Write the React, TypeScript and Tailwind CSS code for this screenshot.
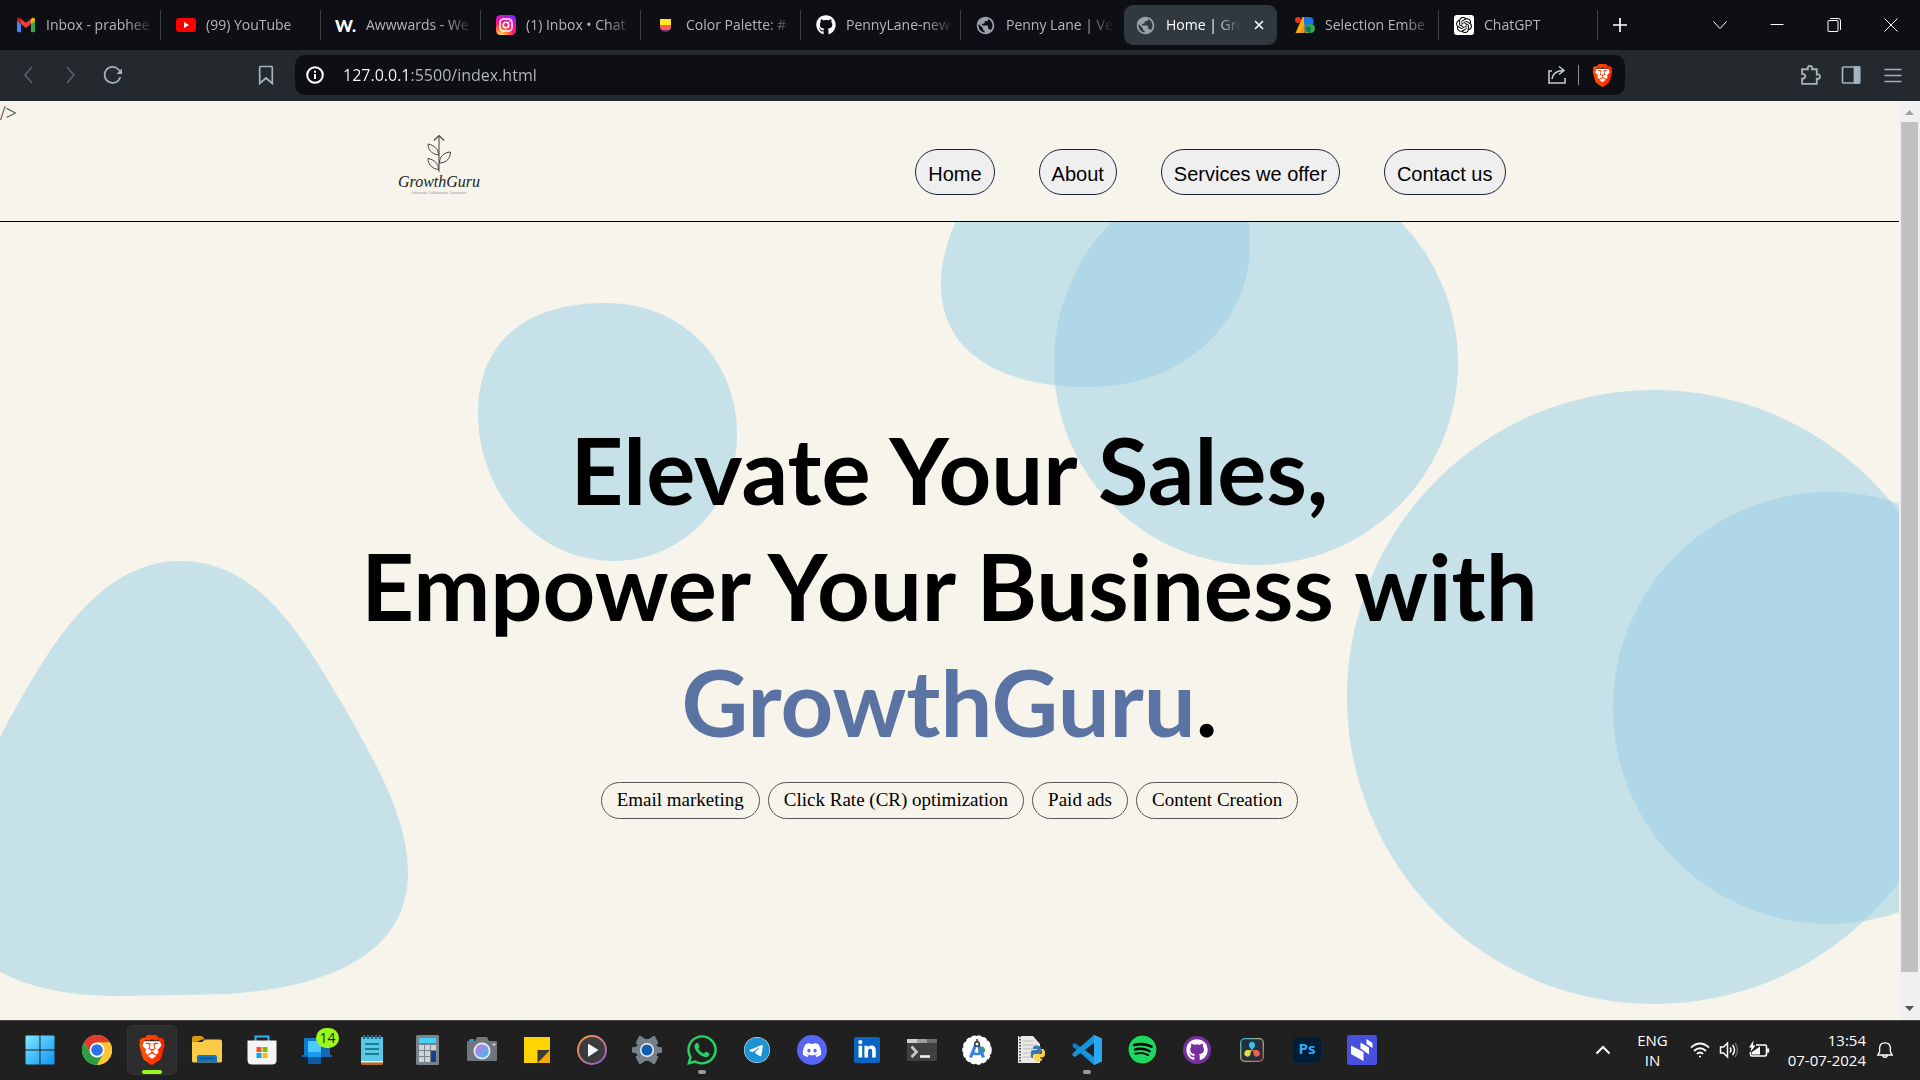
import React from "react";
import {
  FaGithub,
  FaWhatsapp,
  FaTelegram,
  FaDiscord,
  FaSpotify,
  FaLinkedinIn,
} from "react-icons/fa6";
import { SiBrave, SiOpenai } from "react-icons/si";
import { MdPublic } from "react-icons/md";

/* ---------- favicons ---------- */

const Gmail = () => (
  <svg viewBox="0 0 20 16" className="h-4 w-[18px]">
    <path d="M0 3v11.500q0 1.500 1.500 1.500H4.500V6.500z" fill="#4285f4" />
    <path d="M20 3v11.500q0 1.500-1.500 1.500H15.500V6.500z" fill="#34a853" />
    <path d="M15.500 1.500V7L20 3.500V2.200C20 .2 17.800-.6 16.200.6z" fill="#fbbc04" />
    <path d="M4.500 1.500V7L0 3.500V2.200C0 .2 2.200-.6 3.800.6z" fill="#c5221f" />
    <path d="M4.500 7V1.200L10 5.500l5.500-4.300V7L10 11.200z" fill="#ea4335" />
  </svg>
);

const YouTube = () => (
  <svg viewBox="0 0 20 14" className="h-[14px] w-5">
    <rect width="20" height="14" rx="3" fill="#f00" />
    <path d="M8 4l5 3-5 3z" fill="#fff" />
  </svg>
);

const Awwwards = () => (
  <span className="font-['Lato'] text-[17px] leading-none font-black text-white">W.</span>
);

const Instagram = () => (
  <svg viewBox="0 0 20 20" className="size-5">
    <defs>
      <radialGradient id="ig" cx="0.25" cy="1.050" r="1.150">
        <stop offset="0.050" stopColor="#fd5" />
        <stop offset="0.300" stopColor="#ff7a30" />
        <stop offset="0.550" stopColor="#ff1a68" />
        <stop offset="0.800" stopColor="#e010c0" />
        <stop offset="1" stopColor="#7a2bff" />
      </radialGradient>
    </defs>
    <rect width="20" height="20" rx="4.500" fill="url(#ig)" />
    <rect x="4" y="4" width="12" height="12" rx="3.500" fill="none" stroke="#fff" strokeWidth="1.500" />
    <circle cx="10" cy="10" r="2.800" fill="none" stroke="#fff" strokeWidth="1.500" />
    <circle cx="13.500" cy="6.500" r=".8" fill="#fff" />
  </svg>
);

const ColorHunt = () => (
  <svg viewBox="0 0 11 13" className="h-[13px] w-[11px]">
    <path d="M0 0h11v7.500a5.500 5.500 0 0 1-11 0z" fill="#6a2c70" />
    <path d="M0 0h11v7.500q0 2-1.500 3.500h-8Q0 9.500 0 7.500z" fill="#ff5a5f" />
    <path d="M0 0h11v6H0z" fill="#ffe62b" />
  </svg>
);

const EmberIcon = () => (
  <svg viewBox="0 0 20 16" className="h-4 w-5">
    <path d="M7.500 0h6v16h-13z" fill="#fa0" />
    <circle cx="3" cy="3" r="3" fill="#ea3323" />
    <path d="M9 0h6a4.500 4.500 0 0 1 1 8.500L11 16H9z" fill="#1a73e8" />
    <circle cx="15.500" cy="11.500" r="4.500" fill="#34a853" />
    <path d="M11.500 9.500h4v6.400a4.500 4.500 0 0 1-4-6.400z" fill="#0b7a3b" />
    <path d="M9.500 6L9.500 16H5z" fill="#f29900" />
  </svg>
);

const ChatGpt = () => (
  <span className="flex size-5 items-center justify-center rounded-[3px] bg-white">
    <SiOpenai className="size-4 text-black" />
  </span>
);

const Globe = () => <MdPublic className="size-[21px] text-[#9aa0a6]" />;

const Lion = ({ id, className }: { id: string; className: string }) => (
  <span className={"relative flex items-center justify-center " + className}>
    <svg viewBox="0 0 24 24" className="absolute inset-0 size-full">
      <defs>
        <linearGradient id={id} x1="0" y1="0" x2="1" y2="0">
          <stop offset="0" stopColor="#ff5500" />
          <stop offset="1" stopColor="#ff2000" />
        </linearGradient>
      </defs>
      <path d="M5.500 5h13L20 9l-3 8-5 5-5-5-3-8z" fill="#fff" />
    </svg>
    <SiBrave className="relative size-full" style={{ fill: `url(#${id})` }} />
  </span>
);

/* ---------- browser chrome ---------- */

const tabs: { title: string; icon: React.ReactNode }[] = [
  { title: "Inbox - prabhee", icon: <Gmail /> },
  { title: "(99) YouTube", icon: <YouTube /> },
  { title: "Awwwards - We", icon: <Awwwards /> },
  { title: "(1) Inbox • Chat", icon: <Instagram /> },
  { title: "Color Palette: #", icon: <ColorHunt /> },
  { title: "PennyLane-new", icon: <FaGithub className="size-5 text-white" /> },
  { title: "Penny Lane | Ve", icon: <Globe /> },
  { title: "Home | Gro", icon: <Globe /> },
  { title: "Selection Embe", icon: <EmberIcon /> },
  { title: "ChatGPT", icon: <ChatGpt /> },
];

const fade = "[mask-image:linear-gradient(90deg,#000_calc(100%_-_28px),transparent)]";

function Line({ d, className, width = 1 }: { d: string; className: string; width?: number }) {
  return (
    <svg viewBox="0 0 20 20" className={className} fill="none" stroke="currentColor" strokeWidth={width}>
      <path d={d} />
    </svg>
  );
}

function TabStrip() {
  return (
    <div className="flex h-[50px] items-center bg-[#0e0f14] pl-px text-[#b4b7ba]">
      <div role="tablist" className="flex h-full items-center">
        {tabs.map((t, i) => {
          const active = i === 7;
          return (
            <div
              key={t.title}
              className={
                "flex items-center " +
                (i > 6 ? "w-[159px] " : "w-40 ") +
                (active ? "px-[3px]" : i === 6 ? "" : "border-r border-[#3f4144]")
              }
            >
              <button
                role="tab"
                aria-selected={active}
                className={
                  "flex min-w-0 flex-1 items-center text-left " +
                  (active ? "h-10 rounded-[9px] bg-[#303840] pl-[11px] text-white" : "h-[30px] pl-3.5")
                }
              >
                <span className="flex w-[21px] shrink-0 items-center justify-center">{t.icon}</span>
                <span
                  className={
                    "ml-2.5 overflow-hidden text-sm whitespace-nowrap " +
                    (active ? "w-[75px] " : "w-[108px] ") +
                    fade
                  }
                >
                  {t.title}
                </span>
                {active && <Line d="M5 5l10 10M15 5L5 15" width={2} className="ml-2.5 size-4 shrink-0" />}
              </button>
            </div>
          );
        })}
      </div>
      <button aria-label="New tab" className="ml-3 text-white">
        <Line d="M10 3v14M3 10h14" width={1.700} className="size-5" />
      </button>
      <div className="mr-px ml-auto flex text-white">
        <button aria-label="Search tabs" className="flex w-14 justify-center">
          <Line d="M3.500 6.500L10 13.500l6.500-7" className="size-5" />
        </button>
        <button aria-label="Minimize" className="flex w-[57px] justify-center">
          <Line d="M3.500 9.500h13" className="size-5" />
        </button>
        <button aria-label="Restore" className="flex w-[57px] justify-center">
          <Line d="M4 6q0-.5.500-.5h9q.5 0 .5.500v10q0 .5-.5.500h-9q-.5 0-.5-.5zM6 3.500h8.500q2 0 2 2V15" className="size-5" />
        </button>
        <button aria-label="Close" className="flex w-[57px] justify-center">
          <Line d="M3.500 3.500l13 13M16.500 3.500l-13 13" className="size-5" />
        </button>
      </div>
    </div>
  );
}

function Toolbar() {
  return (
    <div className="flex h-[51px] items-center bg-[#23292d] pb-px text-[#a3b4bd]">
      <button aria-label="Back" className="ml-[18px] text-[#5b6469]">
        <Line d="M14 2L7 10l7 8" width={1.500} className="size-5" />
      </button>
      <button aria-label="Forward" className="ml-[23px] text-[#5b6469]">
        <Line d="M6 2l7 8-7 8" width={1.500} className="size-5" />
      </button>
      <button aria-label="Reload" className="ml-[22px]">
        <svg viewBox="0 0 20 20" className="size-5" fill="none" stroke="currentColor" strokeWidth="1.600">
          <path d="M17.300 12A8 8 0 1 1 15.500 4.500L18 7" />
          <path d="M19 3.500v5.500h-5.500z" fill="currentColor" stroke="none" />
        </svg>
      </button>
      <button aria-label="Bookmark this page" className="ml-[133px]">
        <Line d="M4.500 1.500h11q.8 0 .8.800V18.500L10 13l-6.300 5.500V2.300q0-.8.800-.8z" width={1.700} className="size-5" />
      </button>
      <div className="ml-[19px] flex h-10 min-w-0 flex-1 items-center rounded-[10px] bg-[#0e0f14] pl-2.5 text-white">
        <svg viewBox="0 0 20 20" className="size-5 shrink-0" fill="none" stroke="currentColor" strokeWidth="2">
          <circle cx="10" cy="10" r="7.800" />
          <path d="M10 9v5M10 5.800v2" />
        </svg>
        <input
          aria-label="Address"
          defaultValue="127.0.0.1:5500/index.html"
          className="ml-[18px] min-w-0 flex-1 bg-[linear-gradient(90deg,#fff_67px,#b6bbbf_67px)] bg-clip-text text-base text-transparent outline-none"
        />
        <button aria-label="Share" className="text-[#c3c8cb]">
          <Line d="M5 6H2v12h16v-5M5 14q1-8 11-8.500M12 1.500l5 4-5 4" width={1.600} className="size-5" />
        </button>
        <span className="ml-[11px] h-5 w-px bg-[#8d9296]" />
        <button aria-label="Brave Shields" className="mr-[11px] ml-3">
          <Lion id="shield" className="size-[23px]" />
        </button>
      </div>
      <button aria-label="Extensions" className="ml-[175px]">
        <Line
          d="M2 4h5.500q-.5-3 2-3t2 3H16v5q3-.5 3 2t-3 2v5H2v-5q3 0 3-2.300T2 8.500z"
          width={1.800}
          className="size-[21px]"
        />
      </button>
      <button aria-label="Sidebar" className="ml-5">
        <svg viewBox="0 0 20 20" className="size-5" fill="none" stroke="currentColor" strokeWidth="1.700">
          <rect x="1.500" y="2" width="17" height="16" rx="1" />
          <path d="M13.500 2h5v16h-5z" fill="currentColor" />
        </svg>
      </button>
      <button aria-label="Menu" className="mr-[17px] ml-[22px]">
        <Line d="M1.500 4.500h17M1.500 10.500h17M1.500 16.500h17" width={1.500} className="size-5" />
      </button>
    </div>
  );
}

/* ---------- web page ---------- */

function SiteLogo() {
  return (
    <a href="#home" className="flex w-[91px] flex-col items-center text-[#444]">
      <svg viewBox="0 0 30 40" className="h-10 w-[30px]" fill="none" stroke="currentColor">
        <path d="M15 2v36" strokeWidth="1.500" opacity=".7" />
        <path d="M10 6.500L15 1.500l5 5" strokeWidth="1.200" />
        <path d="M14.500 21C7 20 4 15 4 10c6 1 10.500 5 10.500 11zM14.500 35.500C7 34.500 4 29.500 4 24.500c6 1 10.500 5 10.500 11zM15.500 29c0-6 4-10.500 11-11 0 6-4 11-11 11z" strokeWidth="1" />
      </svg>
      <span className="font-['Liberation_Serif',serif] text-base leading-4 text-[#222] italic">GrowthGuru</span>
      <span className="font-['Liberation_Sans',sans-serif] text-[4px] leading-[6px] whitespace-nowrap text-[#999]">
        Innovate Collaborate Dominate
      </span>
    </a>
  );
}

function SiteHeader() {
  return (
    <header className="relative h-[121px] border-b border-black">
      <span className="absolute top-0 left-0 font-['Liberation_Serif',serif] text-xl leading-6 text-[#444]">/&gt;</span>
      <div className="mx-auto flex max-w-[1112px] items-start justify-between">
        <div className="pt-[33px]">
          <SiteLogo />
        </div>
        <nav className="flex gap-11 pt-12 font-['Liberation_Sans',sans-serif] text-xl text-black">
          {["Home", "About", "Services we offer", "Contact us"].map((n) => (
            <button key={n} className="h-[46px] rounded-full border border-[#1a2238] bg-[#efefef] px-3 pt-1">
              {n}
            </button>
          ))}
        </nav>
      </div>
    </header>
  );
}

function Blobs() {
  return (
    <svg
      viewBox="0 0 1899 798"
      preserveAspectRatio="xMidYMid slice"
      className="absolute inset-0 size-full"
      fill="#97cde6"
      fillOpacity=".5"
    >
      <path d="M478 191C478 125 520 81 606 81C684 81 737 140 737 212C737 285 680 339 614 339C536 339 478 270 478 191z" />
      <path d="M957-3C946 20 941 43 941 63C941 130 1000 165 1088 165C1185 165 1250 100 1250 22C1250 12 1250 5 1248-3z" />
      <path d="M-5 525L0 515C45 432 95 339 181 339C265 339 310 430 343 483C375 540 408 595 408 651C408 725 340 765 227 772L122 774C70 774 30 767-5 747z" />
      <circle cx="1256" cy="141" r="202" />
      <circle cx="1654" cy="475" r="307" />
      <circle cx="1829" cy="486" r="216" />
    </svg>
  );
}

function Hero() {
  return (
    <main className="relative flex-1 overflow-hidden">
      <Blobs />
      <div className="relative flex flex-col items-center pt-[190px]">
        <h1 className="text-center font-['Lato',sans-serif] text-[92px] leading-[116px] font-bold text-black">
          Elevate Your Sales,
          <br />
          Empower Your Business with
          <br />
          <span className="text-[#5a73a3]">GrowthGuru</span>.
        </h1>
        <ul className="mt-[22px] flex gap-2 font-['Liberation_Serif',serif] text-[19px] text-black">
          {["Email marketing", "Click Rate (CR) optimization", "Paid ads", "Content Creation"].map((c) => (
            <li key={c} className="flex h-[37px] items-center rounded-full border border-[#555] px-[15px]">
              {c}
            </li>
          ))}
        </ul>
      </div>
    </main>
  );
}

function ScrollBar() {
  return (
    <div className="flex w-[21px] flex-col items-center bg-[#f0f0f0]">
      <svg viewBox="0 0 21 21" className="size-[21px]">
        <path d="M6 14h9l-4.500-5z" fill="#a3a3a3" />
      </svg>
      <div className="w-[17px] flex-1 bg-[#c1c1c1]" />
      <svg viewBox="0 0 21 48" className="h-12 w-[21px]">
        <path d="M6 34h9l-4.500 5z" fill="#505050" />
      </svg>
    </div>
  );
}

/* ---------- taskbar icons ---------- */

const Windows = () => (
  <svg viewBox="0 0 30 30" className="size-[30px]">
    <defs>
      <linearGradient id="win" x1="0" y1="0" x2="1" y2="1">
        <stop offset="0" stopColor="#7deaff" />
        <stop offset="1" stopColor="#0f93f5" />
      </linearGradient>
    </defs>
    <path d="M.5 1.500a1 1 0 0 1 1-1H14.500v14H.5zM15.500.5h13a1 1 0 0 1 1 1v13h-14zM.5 15.500h14v14H1.500a1 1 0 0 1-1-1zM15.500 15.500h14v13a1 1 0 0 1-1 1h-13z" fill="url(#win)" />
  </svg>
);

const Chrome = () => (
  <svg viewBox="0 0 30 30" className="size-[30px]">
    <circle cx="15" cy="15" r="15" fill="#fbc02d" />
    <path d="M15 15L8.500 18.800 2 7.500A15 15 0 0 1 28 7.500H15z" fill="#e23b2e" />
    <path d="M2 7.500L8.500 18.800 15 22.500l6.500-3.700L15 30A15 15 0 0 1 2 7.500z" fill="#2a9d48" />
    <path d="M28 7.500A15 15 0 0 1 15 30l6.500-11.200L15 7.500z" fill="#fdc534" />
    <circle cx="15" cy="15" r="7.500" fill="#fff" />
    <circle cx="15" cy="15" r="5.800" fill="#2b74e8" />
  </svg>
);

const Explorer = () => (
  <svg viewBox="0 0 30 27" className="h-[27px] w-[30px]">
    <path d="M0 2Q0 0 2 0h8l3 3.500h-3L0 8z" fill="#d89a10" />
    <path d="M0 6h10l3-2.500h15q2 0 2 2V25q0 1.500-1.500 1.500h-27Q0 26.500 0 25z" fill="#fccb45" />
    <path d="M5 26.500V21q0-2 2-2h16q2 0 2 2v5.500z" fill="#1173c4" />
    <path d="M8 22.500h14" stroke="#0b4c8c" strokeWidth="1.200" />
  </svg>
);

const Store = () => (
  <svg viewBox="0 0 30 30" className="size-[30px]">
    <path d="M8.500 6V1.500h13V6" fill="none" stroke="#2ab4ee" strokeWidth="2" />
    <path d="M.5 5.500h29V25q0 4.500-4.500 4.500H5Q.5 29.500.5 25z" fill="#f5f5f5" />
    <path d="M9.500 12h5v5h-5z" fill="#f25022" />
    <path d="M15.500 12h5v5h-5z" fill="#7fba00" />
    <path d="M9.500 18h5v5h-5z" fill="#00a4ef" />
    <path d="M15.500 18h5v5h-5z" fill="#ffb900" />
  </svg>
);

const PhoneLink = () => (
  <span className="relative flex">
    <svg viewBox="0 0 30 30" className="size-[30px]">
      <path d="M2 3h26v17h2v2H0v-2h2z" fill="#1368b8" />
      <path d="M2 3h14v17H2z" fill="#0f7ad0" />
      <path d="M6 6h13v22H6z" fill="#1a9be8" />
      <path d="M6 6h13v11H6z" fill="#4cc8fa" />
      <path d="M6 22h13v7H6z" fill="#0c5aa8" />
    </svg>
    <span className="absolute -top-[7px] left-3.5 flex h-5 w-[23px] items-center justify-center rounded-full bg-[#9bf81d] text-sm text-[#1c2a08]">
      14
    </span>
  </span>
);

const Notepad = () => (
  <svg viewBox="0 0 22 30" className="h-[30px] w-[22px]">
    <path d="M0 26h22v3q0 1-1 1H1q-1 0-1-1z" fill="#b4651f" />
    <path d="M0 25h22v2.500H0z" fill="#f2f2f2" />
    <path d="M0 2h22v24H0z" fill="#5bc8e6" />
    <path d="M4 9h14M4 14h14M4 19h14" stroke="#0b6480" strokeWidth="1.600" />
    <path d="M3 0v4M7 0v4M11 0v4M15 0v4M19 0v4" stroke="#16728f" strokeWidth="2.200" />
  </svg>
);

const Calculator = () => (
  <svg viewBox="0 0 23 30" className="h-[30px] w-[23px]">
    <rect width="23" height="30" rx="1.500" fill="#7a828a" />
    <path d="M3 3h17v5H3z" fill="#45d0f5" />
    <path d="M3 10h5v5H3zM9 10h5v5H9zM15 10h5v5h-5zM3 16h5v5H3zM9 16h5v5H9zM3 22h5v5H3zM9 22h5v5H9z" fill="#cfd4da" />
    <path d="M15 16h5v11h-5z" fill="#143f8c" />
  </svg>
);

const Camera = () => (
  <svg viewBox="0 0 30 26" className="h-[26px] w-[30px]">
    <defs>
      <linearGradient id="lens" x1="0" y1="0" x2="1" y2="1">
        <stop offset="0" stopColor="#d86fe0" />
        <stop offset="1" stopColor="#2fc4f0" />
      </linearGradient>
    </defs>
    <path d="M2 4q0-2 2-2h3v4H2z" fill="#26a3e0" />
    <path d="M0 5q0-1 1-1h7l2-4h10l2 4h7q1 0 1 1v18q0 1-1 1H1q-1 0-1-1z" fill="#70767d" />
    <circle cx="15" cy="14" r="8.500" fill="#e8ecf0" />
    <circle cx="15" cy="14" r="6.800" fill="url(#lens)" />
    <path d="M27 6v3M25.500 7.500h3" stroke="#cfd4da" />
  </svg>
);

const Sticky = () => (
  <svg viewBox="0 0 26 26" className="size-[26px]">
    <path d="M0 0h26v26H0z" fill="#ffd400" />
    <path d="M13 26L26 13v13z" fill="#f5a700" />
    <path d="M13.500 13H26L13.500 26z" fill="#3a3a3a" />
  </svg>
);

const MediaPlayer = () => (
  <svg viewBox="0 0 30 30" className="size-[30px]">
    <defs>
      <linearGradient id="mp" x1="0" y1="0" x2="1" y2="1">
        <stop offset="0" stopColor="#ff9a3c" />
        <stop offset="1" stopColor="#8a5ad8" />
      </linearGradient>
    </defs>
    <circle cx="15" cy="15" r="14" fill="#3b3b3d" stroke="url(#mp)" strokeWidth="2" />
    <path d="M11 8.500v13.500L21.500 15z" fill="#f5f5f5" />
  </svg>
);

const Settings = () => (
  <svg viewBox="0 0 30 30" className="size-[30px]" fill="#77808a">
    <circle cx="15" cy="15" r="11" />
    <path d="M5 12L0 13v4l5 1zM25 12l5 1v4l-5 1z" stroke="#77808a" strokeWidth="1" strokeLinejoin="round" />
    <path
      d="M5 8l3-6 4.500 3zM25 8l-3-6-4.500 3zM5 22l3 6 4.500-3zM25 22l-3 6-4.500-3z"
      stroke="#77808a"
      strokeWidth="2.500"
      strokeLinejoin="round"
    />
    <circle cx="15" cy="15" r="7" fill="#f0f4f8" />
    <circle cx="15" cy="15" r="5.500" fill="#0f5fb0" />
  </svg>
);

const Terminal = () => (
  <svg viewBox="0 0 30 22" className="h-[22px] w-[30px]">
    <rect width="30" height="22" rx="1" fill="#404040" />
    <path d="M0 0h10v4H0z" fill="#d0d0d0" />
    <path d="M10 0h10v4H10z" fill="#a0a0a0" />
    <path d="M20 0h10v4H20z" fill="#6c6c6c" />
    <path d="M4.500 7.500L9.500 13l-5 5" fill="none" stroke="#c8c8c8" strokeWidth="2.800" />
    <path d="M13 17.500h10" stroke="#f0f0f0" strokeWidth="2.600" />
  </svg>
);

const AndroidStudio = () => (
  <svg viewBox="0 0 30 30" className="size-[30px]">
    <circle cx="15" cy="15" r="14" fill="#fff" stroke="#fff" strokeWidth="1.500" strokeDasharray="4 2" />
    <circle cx="19.500" cy="15" r="3.500" fill="#34a853" />
    <path d="M14 9L8.500 22.500M16 9l5.500 13.500" stroke="#3f7cf0" strokeWidth="3.200" />
    <path d="M9.500 17.500q5.500 3 11 0" fill="none" stroke="#3f7cf0" strokeWidth="2.600" />
    <circle cx="15" cy="9" r="2.300" fill="#fff" stroke="#333" strokeWidth="1.500" />
    <path d="M15 4v3" stroke="#333" strokeWidth="1.500" />
  </svg>
);

const PythonFile = () => (
  <svg viewBox="0 0 30 30" className="size-[30px]">
    <path d="M1 1h15l7 8v19H1z" fill="#e8e8e8" />
    <path d="M3 1v27" stroke="#555" strokeWidth="2" strokeDasharray="1.500 1.500" />
    <path d="M6 6h11M6 10h14M6 14h10M6 18h8M6 22h9" stroke="#bbb" strokeWidth="1" />
    <path d="M14 19v-2q0-2 2-2h4v-1h-4v-2q1-1.500 4-1.500t4 2V17q0 2-2 2h-4q-2 0-2 2v2h-1q-2-1-1-4z" fill="#3a76ab" />
    <path d="M24 14h2q2 .5 2 4.500t-3 4h-4v1h4v1.500q-1 1.500-4 1.500t-4-2.500v-3q0-2 2-2h4q2 0 2-2z" fill="#ffd040" />
  </svg>
);

const VsCode = () => (
  <svg viewBox="0 0 30 30" className="size-[30px]">
    <path d="M22 0L9 12.500 3 8 .5 9.500v2L22 30l8-3.500v-23z" fill="#0f7cc4" />
    <path d="M22 30L9 17.500 3 22 .5 20.500v-2L22 0v8L13 15l9 7z" fill="#1a93dd" />
    <path d="M22 8l-9 7 9 7z" fill="#202020" />
    <path d="M22 0l8 3.500v23L22 30z" fill="#2aa8f2" />
  </svg>
);

const Davinci = () => (
  <svg viewBox="0 0 24 24" className="size-6">
    <defs>
      <linearGradient id="dv" x1="0" y1="0" x2="1" y2="1">
        <stop offset="0" stopColor="#2fb8d8" />
        <stop offset=".5" stopColor="#c9a86a" />
        <stop offset="1" stopColor="#e0463c" />
      </linearGradient>
    </defs>
    <rect x=".7" y=".7" width="22.600" height="22.600" rx="4" fill="#22303f" stroke="url(#dv)" strokeWidth="1.300" />
    <path d="M12 12c-4-3-3-8 0-8s4 5 0 8z" fill="#3cc0e8" />
    <circle cx="12" cy="7" r="3" fill="#3cc0e8" />
    <path d="M12 12l-4 7-4-3 2-4z" fill="#c8d83c" />
    <circle cx="7.500" cy="15.500" r="3" fill="#dce04a" />
    <path d="M12 12l4 7 4-3-2-4z" fill="#e8503c" />
    <circle cx="16.500" cy="15.500" r="3" fill="#f0604a" />
  </svg>
);

const Photoshop = () => (
  <span className="flex h-[26px] w-7 items-center justify-center rounded-[5px] bg-[#001e36] pb-0.5 font-['Open_Sans'] text-[15px] font-bold text-[#31a8ff]">
    Ps
  </span>
);

const PurpleTiles = () => (
  <svg viewBox="0 0 30 30" className="size-[30px]">
    <rect width="30" height="30" rx="2.500" fill="#4650dd" />
    <path d="M4 10.500l12.500 6.500v9L4 19zM13.500 7.500l8.500 5v7l-8.500-6zM19.500 4l6 4v5l-6-4z" fill="#fff" />
  </svg>
);

const apps: { name: string; icon: React.ReactNode; state?: "active" | "open" }[] = [
  { name: "Chrome", icon: <Chrome /> },
  { name: "Brave", icon: <Lion id="brave" className="size-[30px]" />, state: "active" },
  { name: "File Explorer", icon: <Explorer /> },
  { name: "Microsoft Store", icon: <Store /> },
  { name: "Phone Link", icon: <PhoneLink /> },
  { name: "Notepad", icon: <Notepad /> },
  { name: "Calculator", icon: <Calculator /> },
  { name: "Camera", icon: <Camera /> },
  { name: "Sticky Notes", icon: <Sticky /> },
  { name: "Media Player", icon: <MediaPlayer /> },
  { name: "Settings", icon: <Settings /> },
  { name: "WhatsApp", icon: <FaWhatsapp className="size-[34px] text-[#25d366]" />, state: "open" },
  {
    name: "Telegram",
    icon: (
      <span className="flex rounded-full bg-white">
        <FaTelegram className="size-[26px] text-[#1c93d2]" />
      </span>
    ),
  },
  {
    name: "Discord",
    icon: (
      <span className="flex size-[30px] items-center justify-center rounded-full bg-[#5865f2]">
        <FaDiscord className="size-5 text-white" />
      </span>
    ),
  },
  {
    name: "LinkedIn",
    icon: (
      <span className="flex size-[26px] items-center justify-center rounded-[2px] bg-[#0a66c2]">
        <FaLinkedinIn className="size-5 text-white" />
      </span>
    ),
  },
  { name: "Terminal", icon: <Terminal /> },
  { name: "Android Studio", icon: <AndroidStudio /> },
  { name: "IDLE", icon: <PythonFile /> },
  { name: "Visual Studio Code", icon: <VsCode />, state: "open" },
  {
    name: "Spotify",
    icon: (
      <span className="flex rounded-full bg-black">
        <FaSpotify className="size-[29px] text-[#1ed760]" />
      </span>
    ),
  },
  {
    name: "GitHub Desktop",
    icon: (
      <span className="flex size-7 items-center justify-center rounded-full bg-[#7a2fa0]">
        <FaGithub className="size-[22px] text-white" />
      </span>
    ),
  },
  { name: "DaVinci Resolve", icon: <Davinci /> },
  { name: "Photoshop", icon: <Photoshop /> },
  { name: "Tiles", icon: <PurpleTiles /> },
];

function Taskbar() {
  return (
    <footer className="flex h-[60px] items-center border-t border-[#444] bg-[#202020] pb-0.5 pl-[15px] text-white">
      <button aria-label="Start" className="mr-[7px] flex size-[50px] items-center justify-center">
        <Windows />
      </button>
      <div className="flex gap-[5px]">
        {apps.map((a) => (
          <button
            key={a.name}
            aria-label={a.name}
            className={
              "relative flex size-[50px] items-center justify-center rounded-md " +
              (a.state === "active" ? "border border-[#363636] bg-[#2d2d2d]" : "")
            }
          >
            {a.icon}
            {a.state === "active" && <span className="absolute bottom-0 h-1 w-5 rounded-full bg-[#9bf81d]" />}
            {a.state === "open" && <span className="absolute bottom-px h-1 w-2 rounded-full bg-[#9a9a9a]" />}
          </button>
        ))}
      </div>
      <div className="mr-[26px] ml-auto flex items-center text-[15px] leading-5">
        <button aria-label="Show hidden icons">
          <Line d="M3.500 13.500L10 7l6.500 6.500" width={2} className="size-5" />
        </button>
        <button className="ml-6 text-center">
          ENG
          <br />
          IN
        </button>
        <button aria-label="Network, volume and battery" className="ml-[22px] flex items-center gap-[9px]">
          <Line
            d="M1 7.500q9-8 18 0M4 11q6-5.500 12 0M6.800 14q3.200-3 6.400 0M9 16.500h2"
            width={1.700}
            className="h-5 w-5"
          />
          <svg viewBox="0 0 20 20" className="size-5" fill="none" stroke="currentColor" strokeWidth="1.500">
            <path d="M1.500 7H4.500L8.500 3v14L4.500 13H1.500zM11 7.500q2 2.500 0 5M13.500 5q4 5 0 10" />
            <path d="M16 3q5 7 0 14" stroke="#666" />
          </svg>
          <svg viewBox="0 0 22 20" className="h-5 w-[22px]" fill="none" stroke="currentColor" strokeWidth="1.600">
            <path d="M8 5h9q1.500 0 1.500 1.500v8q0 1.500-1.500 1.500H4q-1.500 0-1.500-1.500V12" />
            <path d="M20 8.500v4" strokeWidth="2.400" />
            <path d="M4 14.500V12l8-5.500v8z" fill="currentColor" stroke="none" />
            <path d="M5.500.5L1 7.500h2.500L2.500 12 7.500 5.500H5z" fill="currentColor" stroke="none" />
          </svg>
        </button>
        <button className="ml-[18px] text-right">
          13:54
          <br />
          07-07-2024
        </button>
        <button aria-label="Notifications" className="ml-2.5">
          <Line
            d="M2 15.500h16l-2-3.500V8q0-6-6-6T4 8v4zM7.500 15.500q0 2.500 2.500 2.500t2.500-2.500"
            width={1.500}
            className="h-5 w-[18px]"
          />
        </button>
      </div>
    </footer>
  );
}

export default function App() {
  return (
    <div className="flex h-screen flex-col overflow-hidden font-['Open_Sans',sans-serif]">
      <TabStrip />
      <Toolbar />
      <div className="flex min-h-0 flex-1 bg-[#f7f4eb]">
        <div className="flex min-w-0 flex-1 flex-col">
          <SiteHeader />
          <Hero />
        </div>
        <ScrollBar />
      </div>
      <Taskbar />
    </div>
  );
}
